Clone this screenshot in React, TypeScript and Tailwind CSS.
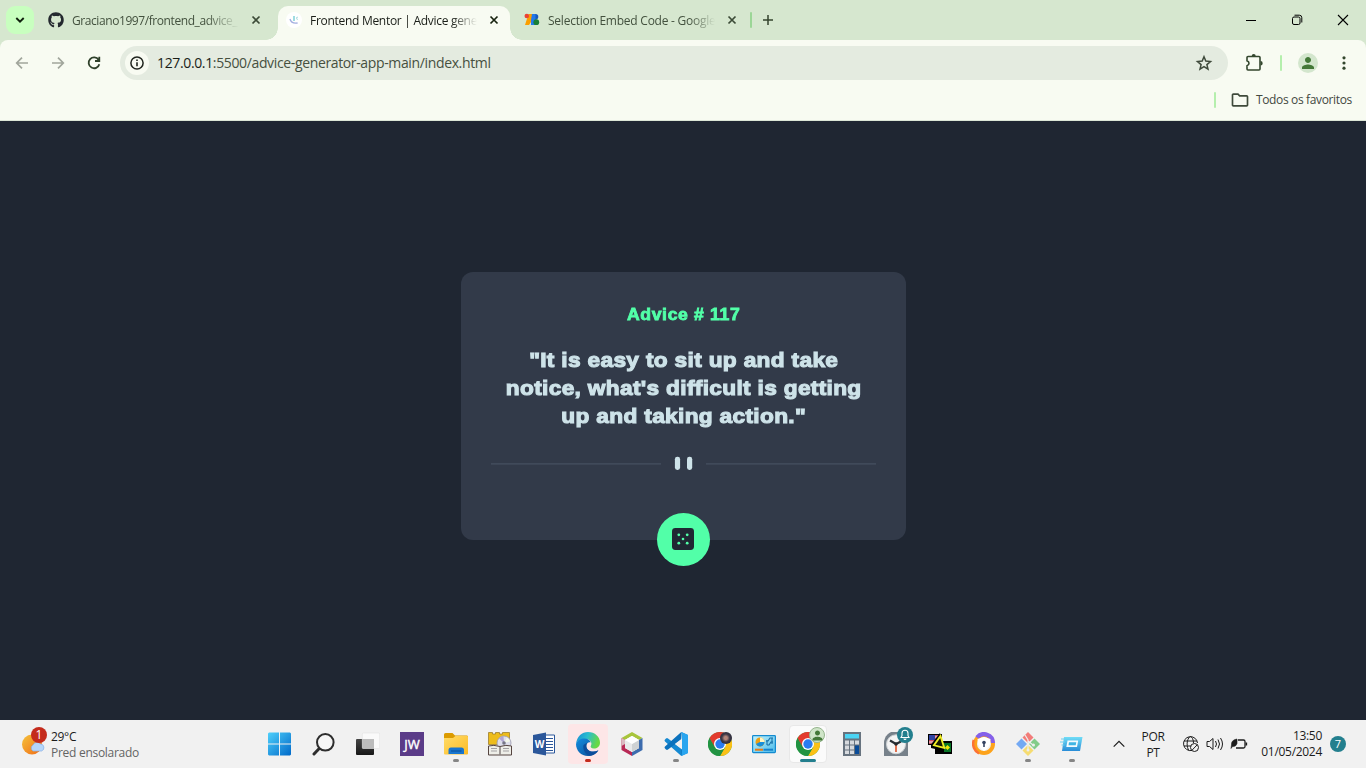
import React from "react";
import { MdOutlineFolder, MdPerson } from "react-icons/md";
import { FaGithub } from "react-icons/fa";

type Box = { children?: React.ReactNode };

const Svg = ({ size = 24, children }: Box & { size?: number }) => (
  <svg width={size} height={size} viewBox="0 0 24 24" fill="none" className="block shrink-0">
    {children}
  </svg>
);

function TabClose({ dark }: { dark?: boolean }) {
  return (
    <svg width="10" height="10" viewBox="0 0 10 10" className="shrink-0">
      <path d="M1.5 1.5l7 7M8.5 1.5l-7 7" stroke={dark ? "#17220f" : "#3c4b37"} strokeWidth="1.7" />
    </svg>
  );
}

function TabTitle({ children, active, tight }: Box & { active?: boolean; tight?: boolean }) {
  return (
    <span
      className={
        active
          ? "w-[167px] whitespace-nowrap pt-0.5 text-[12px] tracking-[-0.29px] text-[#1a1e18] [mask-image:linear-gradient(to_right,black_85%,transparent)]"
          : tight
            ? "w-[167px] whitespace-nowrap pt-0.5 text-[12px] tracking-[-0.42px] text-[#43513e] [mask-image:linear-gradient(to_right,black_80%,transparent)]"
            : "w-[167px] whitespace-nowrap pt-0.5 text-[12px] tracking-[-0.24px] text-[#43513e] [mask-image:linear-gradient(to_right,black_85%,transparent)]"
      }
    >
      {children}
    </span>
  );
}

function TabStrip() {
  return (
    <div className="flex h-10 items-start bg-[#d6e7cf]">
      <div className="ml-1.5 mt-1.5 flex size-7 items-center justify-center rounded-[9px] bg-[#c8ffbf]">
        <svg width="10" height="8" viewBox="0 0 10 8"><path d="M1.3 2l3.7 3.6L8.7 2" fill="none" stroke="#10200d" strokeWidth="1.9" /></svg>
      </div>
      <div className="flex h-10 w-[244px] items-center pl-[14px]">
        <FaGithub className="size-4 shrink-0 text-[#24292f]" />
        <span className="w-2" />
        <TabTitle tight>Graciano1997/frontend_advice_</TabTitle>
        <span className="w-3" />
        <TabClose />
      </div>
      <div className="relative mt-1.5 flex h-[34px] w-[232px] items-center rounded-t-[10px] bg-[#f8fbf2] pb-[6px] pl-2">
        <span className="absolute -left-3 bottom-0 size-3 bg-[radial-gradient(circle_at_0_0,#d6e7cf_11.5px,#f8fbf2_12px)]" />
        <span className="absolute -right-3 bottom-0 size-3 bg-[radial-gradient(circle_at_100%_0,#d6e7cf_11.5px,#f8fbf2_12px)]" />
        <span className="flex size-4 items-center justify-center rounded-full bg-white">
          <svg width="12" height="12" viewBox="0 0 12 12" fill="none">
            <path d="M2 5c.8 3.3 3.4 4.6 7.6 4" stroke="#a4aee0" strokeWidth="1.3" />
            <path d="M6 2v5" stroke="#7fd0d8" strokeWidth="1.5" />
            <path d="M8 4l2-1M8 4.5l2 1" stroke="#a9dce0" />
          </svg>
        </span>
        <span className="w-2" />
        <TabTitle active>Frontend Mentor | Advice gene</TabTitle>
        <span className="w-3" />
        <TabClose dark />
      </div>
      <div className="flex h-10 w-[240px] items-center pl-[14px]">
        <svg width="16" height="16" viewBox="0 0 16 16" className="shrink-0">
          <path d="M7 2h4v11H7z" fill="#1967d2" />
          <path d="M4.5 2H9v5L5 13H1z" fill="#fb9f00" />
          <path d="M8 2h4v11H7V8z" fill="#2379ea" />
          <circle cx="2.800" cy="4" r="2.300" fill="#ea4335" />
          <path d="M11.500 2a2.800 2.800 0 0 1 0 5.600z" fill="#185abc" />
          <circle cx="12.3" cy="10.200" r="2.900" fill="#188038" />
        </svg>
        <span className="w-2" />
        <TabTitle>Selection Embed Code - Google</TabTitle>
        <span className="w-3" />
        <TabClose />
      </div>
      <div className="flex h-10 flex-1 items-center">
        <span className="h-4 w-0.5 rounded bg-[#9bd696]" />
        <svg width="12" height="12" viewBox="0 0 12 12" className="ml-[10px]"><path d="M6 1v10M1 6h10" stroke="#34442e" strokeWidth="1.5" /></svg>
      </div>
      <div className="flex h-10 w-[138px] items-center">
        <span className="flex w-[46px] justify-center"><span className="h-px w-2.5 bg-black" /></span>
        <span className="flex w-[46px] justify-center">
          <svg width="12" height="12" viewBox="0 0 12 12" fill="none" stroke="#000">
            <rect x="1.5" y="3" width="7.5" height="7.5" rx="1.5" />
            <path d="M3.5 1.2h4.8a2.5 2.5 0 0 1 2.5 2.5v4.8" />
          </svg>
        </span>
        <span className="flex w-[46px] justify-center">
          <svg width="12" height="12" viewBox="0 0 12 12"><path d="M1 1l10 10M11 1L1 11" stroke="#000" strokeWidth="1.1" /></svg>
        </span>
      </div>
    </div>
  );
}

function Toolbar() {
  return (
    <div className="bg-[#d6e7cf]">
      <div className="h-[81px] rounded-t-lg border-b border-[#dce6d6] bg-[#f8fbf2]">
        <div className="flex h-[46px] items-center">
          <div className="flex w-[120px] items-center gap-[20px] pl-[14px]">
            <svg width="16" height="16" viewBox="0 0 16 16" fill="none" stroke="#a1a69c" strokeWidth="1.700"><path d="M14 8H3M8 2.700L2.700 8 8 13.300" /></svg>
            <svg width="16" height="16" viewBox="0 0 16 16" fill="none" stroke="#a1a69c" strokeWidth="1.700"><path d="M2 8h11M8 2.700L13.300 8 8 13.300" /></svg>
            <svg width="16" height="16" viewBox="0 0 16 16" fill="none" stroke="#2f402a" strokeWidth="1.800"><path d="M12.600 4.900A5.400 5.400 0 1 0 13.300 9.200M13.300 1.800V6H9" /></svg>
          </div>
          <div className="flex h-[34px] w-[1108px] items-center rounded-full bg-[#e4ebe0] pl-[5px]">
            <span className="flex size-6 items-center justify-center rounded-full bg-[#f8fbf2]">
              <svg width="16" height="16" viewBox="0 0 16 16">
                <circle cx="8" cy="8" r="6.1" fill="none" stroke="#20251e" strokeWidth="1.5" />
                <path d="M8 7.3v4M8 4.5v1.6" stroke="#20251e" strokeWidth="1.6" />
              </svg>
            </span>
            <span className="ml-2 flex-1 whitespace-nowrap pb-0.5 text-[14px] tracking-[-0.36px] text-[#46503f]">
              <span className="text-[#1a1e18]">127.0.0.1</span>:5500/advice-generator-app-main/index.html
            </span>
            <svg width="18" height="18" viewBox="0 0 18 18" className="mr-[15px]">
              <path d="M9 2.800l1.800 4.300 4.700.4-3.600 3.100 1.100 4.600L9 12.700l-4 2.500 1.100-4.600-3.600-3.100 4.700-.4z" fill="none" stroke="#3f4a3b" strokeWidth="1.500" />
            </svg>
          </div>
          <div className="flex flex-1 items-center">
            <svg width="20" height="20" viewBox="0 0 20 20" className="ml-[16px] mr-px">
              <path d="M3 4.500Q3 3.500 4 3.500H15q1 0 1 1V16q0 1-1 1H4q-1 0-1-1v-3.200q2-.6 2-2.500T3 7.800z" fill="none" stroke="#33462d" strokeWidth="1.600" />
              <path d="M7.700 3a2 2 0 0 1 4 0zM16.500 8a2 2 0 0 1 0 4.400z" fill="#33462d" />
            </svg>
            <span className="ml-[15px] h-4 w-0.5 rounded bg-[#b5efad]" />
            <span className="ml-4 flex size-5 items-center justify-center rounded-full bg-[#d3e6cd]">
              <MdPerson className="size-[18px] text-[#437837]" />
            </span>
            <svg width="4" height="16" viewBox="0 0 4 16" className="ml-6" fill="#33462d">
              <circle cx="2" cy="2.8" r="1.6" /><circle cx="2" cy="8" r="1.6" /><circle cx="2" cy="13.2" r="1.6" />
            </svg>
          </div>
        </div>
        <div className="flex h-7 items-center justify-end pr-[14px]">
          <span className="h-4 w-0.5 rounded bg-[#b5efad]" />
          <MdOutlineFolder className="ml-[14px] size-5 text-[#3f4a3b]" />
          <span className="ml-1.5 w-[96px] whitespace-nowrap text-[12px] tracking-[-0.36px] text-[#43483f]">Todos os favoritos</span>
        </div>
      </div>
    </div>
  );
}

function AdviceCard() {
  return (
    <main className="flex h-[599px] justify-center bg-[#1f2632] pt-[151px]">
      <section className="flex h-[268px] w-[445px] flex-col items-center rounded-xl bg-[#323a49] px-[30px] pt-[32px] text-center font-['Liberation_Sans',Arial,sans-serif] font-bold">
        <h1 className="mt-px h-5 scale-x-[1.1] whitespace-nowrap pl-px text-[16px] leading-5 tracking-[0.6px] text-[#52ffa8] [-webkit-text-stroke:0.8px_#52ffa8]">Advice # 117</h1>
        <p className="mt-[21px] scale-x-[1.08] whitespace-nowrap pl-px text-[21px] leading-7 tracking-[0.3px] text-[#cee3e9] [-webkit-text-stroke:1.1px_#cee3e9]">
          "It is easy to sit up and take<br />notice, what's difficult is getting<br />up and taking action."
        </p>
        <svg width="385" height="14" viewBox="0 0 385 14" className="mt-[26px] shrink-0">
          <path fill="#404a5a" d="M0 7h170v1.700H0zM215 7h170v1.700H215z" />
          <rect x="183.900" y=".8" width="5.200" height="13.100" rx="2.400" fill="#cee3e9" />
          <rect x="196" y=".8" width="5.200" height="13.100" rx="2.400" fill="#cee3e9" />
        </svg>
        <button className="mt-[43px] flex size-[53px] shrink-0 items-start justify-center rounded-full bg-[#52ffa8] pt-[15px]">
          <svg width="22" height="22" viewBox="0 0 22 22">
            <rect width="22" height="22" rx="3.4" fill="#202733" />
            <g fill="#52ffa8">
              <circle cx="6.8" cy="6.8" r="1.4" /><circle cx="15.2" cy="6.8" r="1.4" /><circle cx="11" cy="11" r="1.3" />
              <circle cx="6.8" cy="15.2" r="1.4" /><circle cx="15.2" cy="15.2" r="1.4" />
            </g>
          </svg>
        </button>
      </section>
    </main>
  );
}

function Slot({ children, tone }: Box & { tone?: "gray" | "red" | "teal" }) {
  return (
    <div
      className={
        tone === "red"
          ? "relative mx-0.5 flex h-10 w-10 items-center justify-center rounded bg-[#fde6e7]"
          : tone === "teal"
            ? "relative mx-[3px] flex h-[38px] w-[38px] items-center justify-center rounded border border-[#e8e8e8] bg-[#fbfbfb]"
            : "relative flex h-10 w-11 items-center justify-center"
      }
    >
      {children}
      {tone === "gray" && <span className="absolute bottom-0.5 left-[19px] h-[3px] w-1.5 rounded-full bg-[#858585]" />}
      {tone === "red" && <span className="absolute bottom-0.5 left-[17px] h-[3px] w-1.5 rounded-full bg-[#c42b1c]" />}
      {tone === "teal" && <span className="absolute bottom-0 left-2.5 h-[3px] w-4 rounded-full bg-[#237f8e]" />}
    </div>
  );
}

function ChromeLogo() {
  return (
    <Svg>
      <circle cx="12" cy="12" r="12" fill="#34a853" />
      <path d="M12 12L1.6 6A12 12 0 0 1 22.4 6z" fill="#e33b2e" />
      <path d="M12 6h10.4A12 12 0 0 1 12 24l5.2-9z" fill="#fbc116" />
      <path d="M1.6 6A12 12 0 0 0 12 24l5.2-9L12 12l-5.2 3z" fill="#229342" />
      <path d="M1.6 6l5.2 9L12 12l5-6z" fill="#e33b2e" />
      <circle cx="12" cy="12" r="6" fill="#fff" />
      <circle cx="12" cy="12" r="4.7" fill="#2a7cf0" />
    </Svg>
  );
}

function TaskIcons() {
  return (
    <div className="flex w-[836px] items-center">
      <Slot>
        <Svg>
          <defs><linearGradient id="win" x1="0" y1="0" x2="1" y2="1"><stop stopColor="#4fd0fb" /><stop offset="1" stopColor="#0069c9" /></linearGradient></defs>
          <path d="M0 1.500l1-1h10v11H0zM12 .5h10l1 1v10H12zM0 12.500h11v11H1l-1-1zM12 12.500h11v10l-1 1H12z" fill="url(#win)" />
        </Svg>
      </Slot>
      <Slot>
        <Svg>
          <circle cx="13.3" cy="10.3" r="8.3" fill="#f6f6f6" stroke="#2d2d2d" strokeWidth="2" />
          <path d="M7 16.8L2 22" stroke="#2d2d2d" strokeWidth="3" strokeLinecap="round" />
        </Svg>
      </Slot>
      <Slot>
        <Svg>
          <defs><linearGradient id="tv" x1="0" y1="0" x2="0" y2="1"><stop stopColor="#454545" /><stop offset="1" stopColor="#171717" /></linearGradient></defs>
          <rect x="0" y="7" width="18" height="16" rx="1" fill="url(#tv)" />
          <rect x="6.3" y="1" width="17.4" height="15.5" rx="1" fill="#fafafa" stroke="#dedede" strokeWidth=".5" />
          <path d="M6.3 7H18v9.5H6.3z" fill="#bcbcbc" />
        </Svg>
      </Slot>
      <Slot><span className="flex size-6 items-center justify-center bg-[#5b3c88] text-[13px] leading-4 text-white [-webkit-text-stroke:0.4px_white]">JW</span></Slot>
      <Slot tone="gray">
        <Svg>
          <defs><linearGradient id="fold" x1="0" y1="0" x2="1" y2="1"><stop stopColor="#ffdc68" /><stop offset="1" stopColor="#fdbb25" /></linearGradient></defs>
          <path d="M0 2.5Q0 1 1.5 1h7L11 3.5H23Q24 3.5 24 5v7H0z" fill="#dc9b00" />
          <path d="M0 6h9l2.5-2H23q1 0 1 1v16.5q0 1-1 1H1q-1 0-1-1z" fill="url(#fold)" />
          <path d="M4.5 22V18q0-2.5 2.5-2.5h10.500q2.500 0 2.500 2.500v4z" fill="#1976cf" />
          <path d="M7 19h10.500" stroke="#0c56a1" strokeWidth="1.200" />
        </Svg>
      </Slot>
      <Slot>
        <Svg>
          <path d="M.5.500h4v1.500h3V.5h4V2h3V.5h7v12H.5z" fill="#edbc1b" stroke="#927321" strokeWidth=".7" />
          <circle cx="16" cy="11" r="7" fill="#dedfeb" stroke="#9998ad" strokeWidth=".8" />
          <path d="M16 11L11 6.500q2-2 4.500-2z" fill="#b0a5d4" /><path d="M16 11l3-5.500q3 2 3 4z" fill="#f4f8e9" />
          <circle cx="16" cy="11" r="1.800" fill="#767686" />
          <path d="M.5 14q5-1.500 11.500.5 6-2 11.500-.5v9H.5z" fill="#eeeee8" stroke="#554440" />
          <path d="M12 14.500v8" stroke="#6b6260" strokeWidth="1.200" />
          <path d="M3 16.500h6M3 19h6M15 16.500h6M15 19h6" stroke="#a3a1a3" strokeWidth="1" />
        </Svg>
      </Slot>
      <Slot>
        <Svg>
          <path d="M12 3h10.500v18H12z" fill="#fff" stroke="#2b579a" />
          <path d="M14 6.500h7M14 9.500h7M14 12.500h7M14 15.500h7M14 18.500h7" stroke="#2b579a" strokeWidth="1.200" />
          <path d="M1 3L14 .5v23L1 21z" fill="#2b579a" />
          <text x="7.500" y="15.800" textAnchor="middle" fontSize="10" fontWeight="700" fill="#fff">W</text>
        </Svg>
      </Slot>
      <Slot tone="red">
        <Svg>
          <defs>
            <linearGradient id="edge" x1="0" y1="0" x2="1" y2=".3"><stop stopColor="#1688d4" /><stop offset=".5" stopColor="#2bbdcf" /><stop offset="1" stopColor="#68d945" /></linearGradient>
            <linearGradient id="edge2" x1="0" y1="0" x2="1" y2="1"><stop stopColor="#148ce0" /><stop offset="1" stopColor="#0a4b93" /></linearGradient>
          </defs>
          <path d="M0 12C1 4 6 0 12 0c7 0 12 5 12 10.500 0 4-3 6-6 6-3 0-4-1.500-3-3 1.500-3-1-6.500-5-6.500C5 7 1 9 0 12z" fill="url(#edge)" />
          <path d="M0 12c1-3.500 4.500-5.500 8.500-5.500 3 0 5.500 1.500 6.300 4-2-.8-4.500.5-4.500 3.500 0 5 6 7.500 11.800 4.500C20 22 16 24 12 24 5 24 0 18.500 0 12z" fill="url(#edge2)" />
          <path d="M7.500 13c-1 4 1.500 9 6 10.800C18 23.500 21 21 22.500 18.300c-6 3-12 .5-12.200-4.300q0-2 1-3-2 .3-3.800 2z" fill="#0c4d9b" />
        </Svg>
      </Slot>
      <Slot>
        <Svg>
          <path d="M12 0l10.500 6-3.500 2-7-4-7 4-3.500-2z" fill="#a8c53c" />
          <path d="M1.500 6L5 8v8l7 4v4L1.500 18z" fill="#b82956" />
          <path d="M22.500 6L19 8v8l-7 4v4l10.500-6z" fill="#3c6cae" />
          <path d="M1.500 6L5 8v4l-3.500 2z" fill="#dbb9c2" />
          <path d="M12 4l7 4v8l-7 4-7-4V8z" fill="#e9eaec" /><path d="M12 12l7-4v8l-7 4z" fill="#cfd2d4" /><path d="M12 4l7 4-7 4-7-4z" fill="#fff" />
        </Svg>
      </Slot>
      <Slot tone="gray">
        <Svg>
          <path d="M17.300 0L24 3v18l-6.700 3L1 9.500Q0 8.500 1 7.500l1-1q1-.8 2 0L18 17V7z" fill="#1589d2" />
          <path d="M17.300 24L18 17V7L4 17.500q-1 .8-2 0l-1-1q-1-1 0-2L17.300 0z" fill="#0b72bd" />
          <path d="M17.300 0L24 3v18l-6.700 3q.7-1 .7-2V2z" fill="#29a5ef" />
          <path d="M18 6.500v11L10.800 12z" fill="#f1f1f1" />
        </Svg>
      </Slot>
      <Slot>
        <div className="relative">
          <ChromeLogo />
          <span className="absolute left-3 top-0 size-3 rounded-full bg-[radial-gradient(circle_at_48%_50%,#b38579_18%,#403947_45%,#17212e)]" />
        </div>
      </Slot>
      <Slot>
        <Svg>
          <defs><linearGradient id="cp" x1="0" y1="0" x2="1" y2="1"><stop stopColor="#c3f3fd" /><stop offset="1" stopColor="#4abaea" /></linearGradient></defs>
          <rect x=".6" y="3.600" width="22.800" height="17" rx=".8" fill="url(#cp)" stroke="#148bd0" strokeWidth="1.200" />
          <circle cx="8" cy="10" r="4.500" fill="#ed9f13" /><path d="M8 10V5.500A4.500 4.500 0 0 1 12.500 10z" fill="#fff4c4" /><path d="M8 10l-4 2a4.500 4.500 0 0 0 8.500-2z" fill="#168edb" />
          <path d="M14 9h2l2-3h3M15 13h2l2-3h2M15 8v5M20 6v6" stroke="#166fa7" strokeWidth="1.100" />
          <path d="M3 17.700h8" stroke="#e97b14" strokeWidth="2" /><path d="M11.500 17.700H21" stroke="#1882cb" strokeWidth="2" />
        </Svg>
      </Slot>
      <Slot tone="teal">
        <div className="relative">
          <ChromeLogo />
          <span className="absolute -top-[5px] left-[13px] flex size-4 items-center justify-center rounded-full border border-[#96b58e] bg-[#cfe5c8]"><MdPerson className="size-[15px] shrink-0 text-[#427837]" /></span>
        </div>
      </Slot>
      <Slot>
        <Svg>
          <path d="M3 0h18v24H3z" fill="#67737f" /><path d="M5 2h14v4.500H5z" fill="#4bd4f4" />
          <path d="M5 8.500h4v4H5zM10 8.500h4v4h-4zM15 8.500h4v4h-4zM5 13.500h4v4H5zM10 13.500h4v4h-4zM5 18.500h4v3.500H5zM10 18.500h4v3.500h-4z" fill="#d7dade" />
          <path d="M15 13.500h4V22h-4z" fill="#0a4c99" />
        </Svg>
      </Slot>
      <Slot>
        <div className="relative">
          <Svg>
            <path d="M0 24V11A11.500 11.500 0 0 1 24 11v13z" fill="#77818a" />
            <circle cx="12" cy="12.300" r="9.500" fill="#f4f4f4" stroke="#cdd2d5" />
            <path d="M6 8.500l6 3.500 5-2.500" stroke="#272e34" strokeWidth="2.200" /><path d="M12 12v8" stroke="#dc5026" strokeWidth="1.600" /><circle cx="12" cy="12" r="1.700" fill="#22282c" />
          </Svg>
          <span className="absolute -top-[5px] left-[13px] flex size-4 items-center justify-center rounded-full bg-[#237f8e]">
            <svg width="10" height="12" viewBox="0 0 10 12"><path d="M1 8.500l1-1.800V4.200a3 3 0 0 1 6 0v2.500l1 1.800zM4 9.500a1 1 0 0 0 2 0" fill="none" stroke="#fff" strokeWidth="1.100" /></svg>
          </span>
        </div>
      </Slot>
      <Slot>
        <Svg>
          <path d="M0 2h14v11H0z" fill="#000" /><path d="M1 3h12v9H1z" fill="#cf5262" />
          <path d="M1 5h12M1 7.500h12M1 10h12" stroke="#f5e9ef" /><path d="M1 3h6v5H1z" fill="#2f43a1" />
          <path d="M7 9h17v13H7z" fill="#000" /><path d="M16 11h7v9h-7z" fill="#087426" /><path d="M17 15.500l2.500-2.500 2.500 2.500-2.500 2.500z" fill="#f2e60a" />
          <path d="M12 1L3 12.500V16l13 3z" fill="#000" />
          <path d="M12.500 4L6 13.300l10.300 2.700z" fill="#171900" stroke="#f1ee25" strokeWidth="1.900" />
        </Svg>
      </Slot>
      <Slot>
        <Svg>
          <circle cx="12" cy="12" r="9" stroke="#fda31b" strokeWidth="4" />
          <path d="M5 5.500A9 9 0 0 1 21 11" stroke="#8560e9" strokeWidth="4.200" /><path d="M1.800 8A11 11 0 0 0 7 21.500" stroke="#fc7235" strokeWidth="2.500" />
          <path d="M12 5l6.500 2q.5 8-6.500 12Q5 15 5.500 7z" fill="#fff" />
          <circle cx="12" cy="10.500" r="1.800" fill="#354361" /><path d="M12 11v4" stroke="#354361" strokeWidth="1.600" />
        </Svg>
      </Slot>
      <Slot tone="gray">
        <Svg>
          <path d="M12 0l5.500 5.500L12 11 6.500 5.500z" fill="#f27d7a" />
          <path d="M5.500 6.500L11 12l-5.500 5.500L0 12z" fill="#74a9f3" />
          <path d="M18.500 6.500L24 12l-5.500 5.500L13 12z" fill="#82cc89" />
          <path d="M12 13l5.500 5.500L12 24l-5.500-5.500z" fill="#f6dc71" />
          <path d="M9 3l3 5v10M12 9l5 4" stroke="#eee" strokeWidth="1.200" /><circle cx="12" cy="18" r="1.500" fill="#eee" /><circle cx="17.500" cy="13" r="1.500" fill="#eee" />
        </Svg>
      </Slot>
      <Slot tone="gray">
        <Svg>
          <defs><linearGradient id="rn" x1="0" y1="0" x2="0" y2="1"><stop stopColor="#70ddf7" /><stop offset="1" stopColor="#288cd7" /></linearGradient></defs>
          <path d="M4 5h18.500L20 19H2z" fill="url(#rn)" /><path d="M7.500 8.500h10.700l-1.200 6.500H6.300z" fill="#f5fbfe" /><path d="M9 10.200h7.300l-.6 3.100H8.500z" fill="#3fb5e4" />
          <path d="M1 7h5M0 10h5M1.500 13h3" stroke="#6bcff0" />
        </Svg>
      </Slot>
    </div>
  );
}

function Taskbar() {
  return (
    <footer className="flex h-12 items-center bg-[#f1f1f1] text-[12px] leading-4 text-[#1c1c1c]">
      <div className="flex w-[258px] items-center pl-[21px]">
        <svg width="26" height="28" viewBox="0 0 26 28" className="-mt-1.5 shrink-0">
          <defs><linearGradient id="sun" x1="0" y1="0" x2="1" y2="1"><stop stopColor="#f5c33c" /><stop offset="1" stopColor="#f06b16" /></linearGradient></defs>
          <circle cx="11" cy="17.500" r="10" fill="url(#sun)" />
          <path d="M12 24a3.500 3.500 0 0 1 0-6 4.500 4.500 0 0 1 7.500-1 3.600 3.600 0 0 1 1 7z" fill="#b5d6fa" stroke="#87afe6" strokeWidth=".7" />
          <circle cx="18" cy="8" r="8" fill="#c42b1c" /><text x="18" y="12.200" textAnchor="middle" fontSize="12" fill="#fff">1</text>
        </svg>
        <div className="ml-1 whitespace-nowrap pt-0.5">
          <div className="tracking-[-0.3px]">29°C</div>
          <div className="tracking-[-0.28px] text-[#646464]">Pred ensolarado</div>
        </div>
      </div>
      <TaskIcons />
      <div className="flex flex-1 items-center">
        <svg width="12" height="8" viewBox="0 0 12 8" className="ml-[19px]"><path d="M.7 6.700L6 1.400l5.300 5.300" fill="none" stroke="#1c1c1c" strokeWidth="1.200" /></svg>
        <div className="ml-4 w-6 pt-0.5 text-center tracking-[-0.3px]"><div>POR</div><div>PT</div></div>
        <svg width="18" height="18" viewBox="0 0 18 18" className="ml-[17px]" fill="none" stroke="#1c1c1c">
          <path d="M10 15.500A7 7 0 1 1 15.500 8M6.500 15C3.500 9 6 2 8.500 1.500 10 2 11.500 4.500 11.500 8M2 6h13M2 11h7" /><circle cx="12.500" cy="12.500" r="4" /><path d="M10 15.200l5-5.200" />
        </svg>
        <svg width="18" height="16" viewBox="0 0 18 16" className="ml-1.5" fill="none" stroke="#1c1c1c">
          <path d="M1 5.500h2.500L7 2.500v11l-3.500-3H1zM9.500 5q2 3 0 6M12 3.500q3 4.500 0 9M14.500 2q4 6 0 12" />
        </svg>
        <svg width="18" height="14" viewBox="0 0 18 14" className="ml-[6px]" fill="none" stroke="#1c1c1c">
          <path d="M8 3h5.500Q15 3 15 4.500v5q0 1.500-1.500 1.500H6M16.500 5.500v3" strokeWidth="1.300" /><path d="M7 2Q1 3 1.500 8L1 11.500l1.500-2q3.500.5 4.500-3z" fill="#1c1c1c" strokeWidth=".6" />
        </svg>
        <div className="ml-2 w-[66px] whitespace-nowrap text-right tracking-[-0.3px]"><div>13:50</div><div>01/05/2024</div></div>
        <span className="ml-2 flex size-4 items-center justify-center rounded-full bg-[#237f8e] text-[11px] text-white">7</span>
      </div>
    </footer>
  );
}

export default function App() {
  return (
    <div className="flex h-[768px] w-[1366px] flex-col overflow-hidden font-['Open_Sans','Noto_Sans',sans-serif]">
      <TabStrip />
      <Toolbar />
      <AdviceCard />
      <Taskbar />
    </div>
  );
}
